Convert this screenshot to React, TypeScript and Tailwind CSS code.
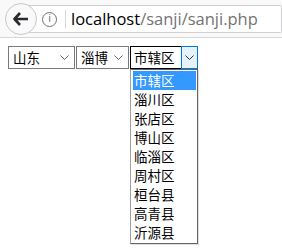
import React from "react"

const cities = ["市辖区", "淄川区", "张店区", "博山区", "临淄区", "周村区", "桓台县", "高青县", "沂源县"]

function Chevron({ color = "#606060" }: { color?: string }) {
  return (
    <svg width="9" height="5" viewBox="0 0 9 5" fill="none">
      <path d="M0.5 0.5 L4.5 4.5 L8.5 0.5" stroke={color} strokeWidth="1" />
    </svg>
  )
}

function Select({ label, width }: { label: string; width: string }) {
  return (
    <div className={`${width} h-[23px] border border-[#7a7a7a] bg-white flex items-center justify-between pl-[4px] pr-[5px]`}>
      <span className="text-[13.5px] leading-none text-black">{label}</span>
      <Chevron />
    </div>
  )
}

export default function App() {
  return (
    <div className="w-[282px] h-[248px] bg-white font-['Noto_Sans_CJK_SC',sans-serif] overflow-hidden">
      {/* browser toolbar */}
      <div className="h-[38px] bg-[#f9f9fa] border-b border-[#d7d7db] pt-[5px] pl-[5px]">
        <div className="relative h-[28px] bg-white border border-[#cfcfd3] border-l-0 rounded-r-[2px] ml-[16px] flex items-center">
          <div className="absolute left-[-16px] top-[-3px] w-[32px] h-[32px] rounded-full border border-[#c8c8cc] bg-[#f9f9fa] flex items-center justify-center">
            <svg width="16" height="14" viewBox="0 0 16 14">
              <path d="M7 1 L1.5 7 L7 13 M1.8 7 H15" stroke="#2a2a2e" strokeWidth="2.6" fill="none" strokeLinejoin="round" />
            </svg>
          </div>
          <div className="ml-[21px] w-[15px] h-[15px] rounded-full border border-[#6f6f73] flex items-center justify-center">
            <span className="text-[10px] leading-none text-[#6f6f73] font-['Liberation_Sans',sans-serif]">i</span>
          </div>
          <div className="ml-[8px] w-px h-[18px] bg-[#d7d7db]" />
          <div className="ml-[5px] text-[16.5px] leading-none font-['Open_Sans',sans-serif]">
            <span className="text-black">localhost</span>
            <span className="text-[#737373]">/sanji/sanji.php</span>
          </div>
        </div>
      </div>

      {/* selects */}
      <div className="flex gap-[1px] pl-[8px] pt-[8px]">
        <Select label="山东" width="w-[67px]" />
        <Select label="淄博" width="w-[53px]" />
        <div className="relative">
          <div className="w-[68px] h-[23px] border border-black bg-white flex items-center">
            <span className="pl-[3px] text-[13.5px] leading-none text-black flex-1">市辖区</span>
            <div className="w-[17px] h-[23px] -mr-px -my-px border border-[#0078d7] bg-[#e5f1fb] flex items-center justify-center">
              <Chevron color="#303030" />
            </div>
          </div>
          <div className="absolute left-0 top-[23px] w-[68px] border border-[#646464] border-l-[#a0a0a0] bg-white py-[1px] pl-[2px] pr-[1px] shadow-[1px_1px_0_#e0e0e0]">
            {cities.map((c, i) => (
              <div
                key={c}
                className={`h-[19px] flex items-center pl-[1px] text-[13.5px] leading-none ${i === 0 ? "bg-[#3399ff] text-white" : "text-black"}`}
              >
                {c}
              </div>
            ))}
          </div>
        </div>
      </div>
    </div>
  )
}
